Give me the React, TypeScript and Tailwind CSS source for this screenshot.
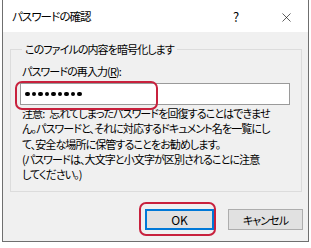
import { X } from 'lucide-react';

const font = "font-['Noto_Sans_CJK_JP','Noto_Sans',sans-serif] [font-feature-settings:'palt']";

export default function App() {
  return (
    <div className={`relative w-[311px] h-[248px] bg-white overflow-hidden text-black ${font}`}>
      <div className="ml-[2px] w-[307px] h-[242px] flex flex-col border-x border-b border-[#6f6f6f]">
        {/* タイトルバー */}
        <div className="h-[32px] bg-white flex items-center pl-[9px] text-[11.5px] tracking-[-0.9px]">
          <span className="flex-1 pt-[2px]">パスワードの確認</span>
          <span className="w-[10px] text-[13px] tracking-normal mr-[36px] pt-[2px]">?</span>
          <X className="w-[15px] h-[15px] mr-[14px] mt-[2px]" strokeWidth={1} />
        </div>

        <div className="flex-1 bg-[#f0f0f0] flex flex-col">
          <fieldset className="mt-[9px] ml-[7px] w-[292px] border border-[#dcdcdc] pl-[9px] pr-[10px] pb-[9px] text-[11px] tracking-[-0.9px]">
            <legend className="ml-[2px] px-[3px] leading-[16px]">このファイルの内容を暗号化します</legend>
            <div className="mt-[6px] pl-[2px] leading-[16px]">
              パスワードの再入力(<span className="underline">R</span>):
            </div>
            <div className="mt-[4px] w-[270px] h-[22px] bg-white border border-[#9a9a9a] flex items-center pl-[4px] gap-[2px]">
              {Array.from({ length: 9 }).map((_, i) => (
                <div key={i} className="w-[4.5px] h-[4.5px] rounded-full bg-black" />
              ))}
            </div>
            <div className="mt-[1px] pl-[2px] leading-[15.25px] whitespace-nowrap">
              <div>
                注意:<span className="ml-[5px]">忘れてしまったパスワードを回復することはできませ</span>
              </div>
              <div>ん。パスワードと、それに対応するドキュメント名を一覧にし</div>
              <div>て、安全な場所に保管することをお勧めします。</div>
              <div>(パスワードは、大文字と小文字が区別されることに注意</div>
              <div>してください。)</div>
            </div>
          </fieldset>

          <div className="mt-[17px] flex justify-end pr-[5px] gap-[14px] text-[12px]">
            <button className="w-[69px] h-[21px] bg-[#e1e1e1] border-2 border-[#0078d7] flex items-center justify-center">
              OK
            </button>
            <button className="w-[75px] h-[21px] bg-[#e1e1e1] border border-[#adadad] flex items-center justify-center text-[11px] tracking-[-0.9px]">
              キャンセル
            </button>
          </div>
        </div>
      </div>

      {/* 赤い強調枠 */}
      <div className="absolute left-[15px] top-[81px] w-[143px] h-[29px] rounded-[7px] border-[2.5px] border-[#c8213d]" />
      <div className="absolute left-[139px] top-[202px] w-[77px] h-[34px] rounded-[7px] border-[2.5px] border-[#c8213d]" />
    </div>
  );
}
